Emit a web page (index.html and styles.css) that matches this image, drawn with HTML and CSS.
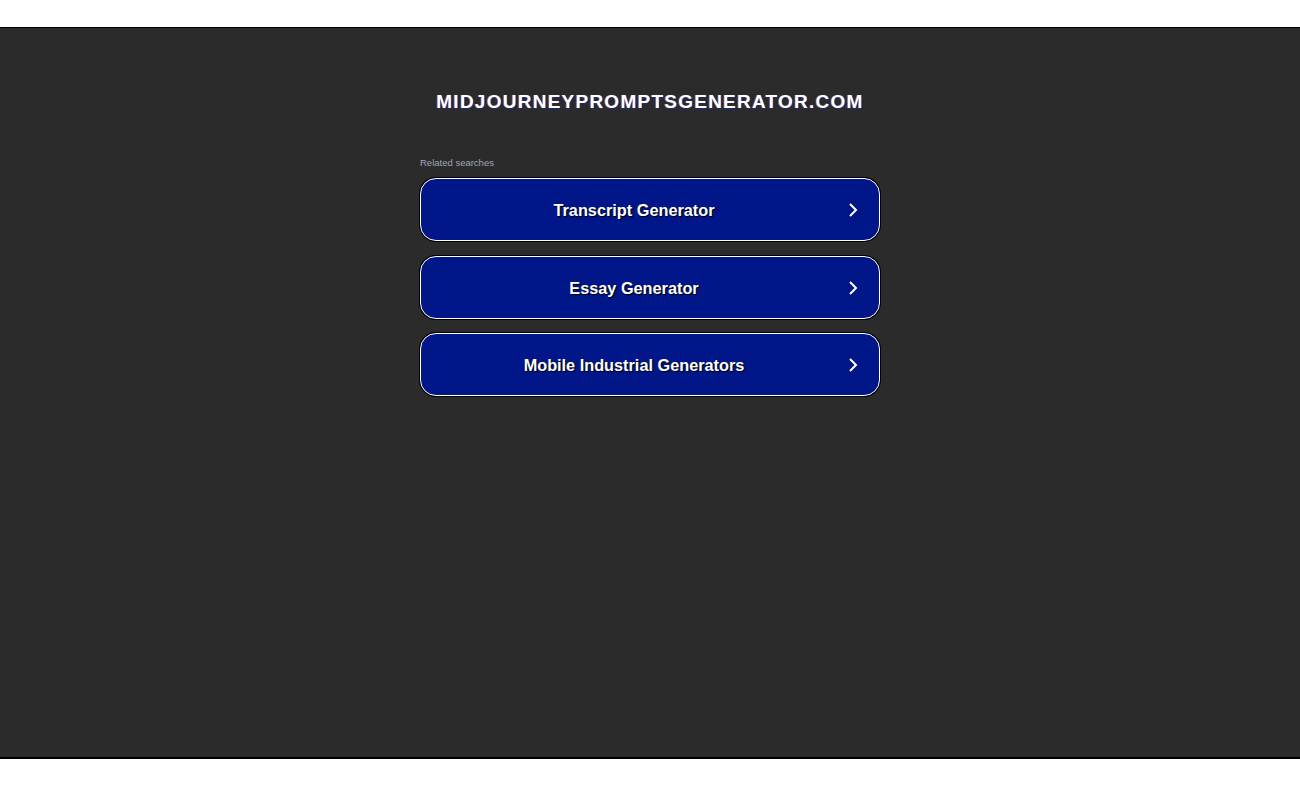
FILE: index.html
```html
<!DOCTYPE html>
<html>
<head>
<meta charset="utf-8">
<link rel="stylesheet" href="styles.css">
</head>
<body>
<div class="top"></div>
<main class="stage">
  <h1 class="domain">MIDJOURNEYPROMPTSGENERATOR.COM</h1>
  <section class="related">
    <div class="label">Related searches</div>
    <a class="item"><span class="txt">Transcript Generator</span><svg class="chev" viewBox="0 0 10 16" width="10" height="16"><path d="M2 2 L8 8 L2 14" fill="none" stroke="#fff" stroke-width="2"/></svg></a>
    <a class="item"><span class="txt">Essay Generator</span><svg class="chev" viewBox="0 0 10 16" width="10" height="16"><path d="M2 2 L8 8 L2 14" fill="none" stroke="#fff" stroke-width="2"/></svg></a>
    <a class="item"><span class="txt">Mobile Industrial Generators</span><svg class="chev" viewBox="0 0 10 16" width="10" height="16"><path d="M2 2 L8 8 L2 14" fill="none" stroke="#fff" stroke-width="2"/></svg></a>
  </section>
</main>
</body>
</html>
```
FILE: styles.css
```css
html, body { margin: 0; padding: 0; background: #fff; }
body { font-family: "Liberation Sans", Arial, sans-serif; }
.top { height: 27px; }
.stage {
  height: 729px;
  background: #2b2b2b;
  border-top: 1px solid #000;
  border-bottom: 2px solid #000;
  display: flex;
  flex-direction: column;
  align-items: center;
}
.domain {
  margin: 62px 0 0;
  font-size: 19px;
  line-height: 24px;
  font-weight: bold;
  letter-spacing: 1.25px;
  color: #fff;
  text-shadow: 1px 1px 0 #1a2a7a, -1px 0 0 rgba(255,120,120,0.35);
}
.related {
  width: 460px;
  margin-top: 43px;
  display: flex;
  flex-direction: column;
  gap: 14.5px;
}
.label {
  font-size: 9.5px;
  color: #a0a6b8;
  line-height: 12px;
  margin-bottom: -5.5px;
}
.item {
  box-sizing: border-box;
  height: 63px;
  padding-top: 2px;
  border: 1px solid #fff;
  box-shadow: 0 0 0 1px #000;
  border-radius: 16px;
  background: #011689;
  display: flex;
  align-items: center;
  justify-content: center;
  position: relative;
  color: #fff;
  font-weight: bold;
  font-size: 16.3px;
  text-shadow: 1px 1px 1px #000;
}
.txt { margin-right: 32px; }
.chev { position: absolute; right: 21px; top: 23px; }
```
